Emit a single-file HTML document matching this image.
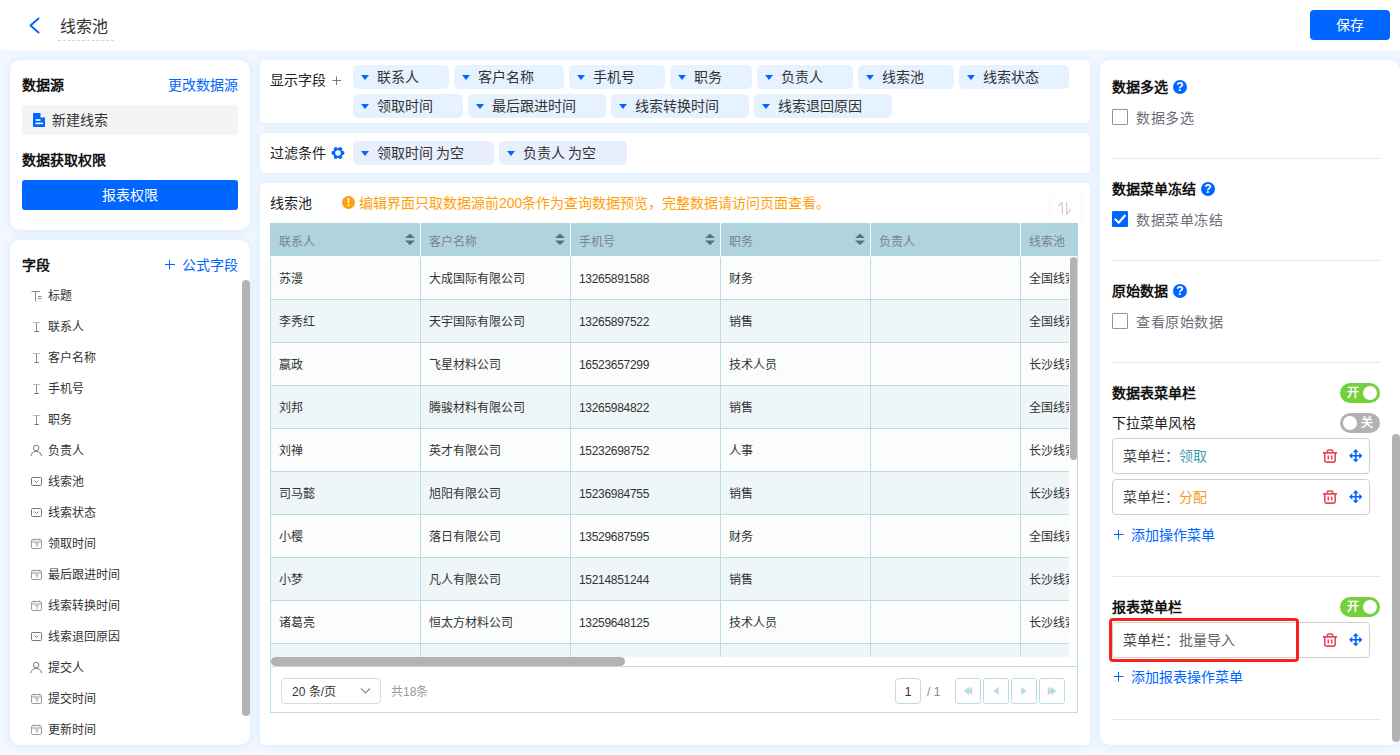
<!DOCTYPE html>
<html lang="zh-CN">
<head>
<meta charset="utf-8">
<title>线索池</title>
<style>
*{box-sizing:border-box;margin:0;padding:0}
html,body{width:1400px;height:755px;overflow:hidden}
body{font-family:"Liberation Sans",sans-serif;font-size:14px;color:#222;background:#f3f8ff;position:relative}
.abs{position:absolute}
.hdr{position:absolute;left:0;top:0;width:1400px;height:50px;background:#fff}
.title{position:absolute;left:58px;top:14px;width:56px;height:27px;padding-top:1px;font-size:16px;line-height:24px;color:#333;border-bottom:1px dashed #d4d4d4;padding-left:2px;white-space:nowrap}
.save{position:absolute;left:1310px;top:10px;width:80px;height:30px;background:#0066ff;border-radius:4px;color:#fff;font-size:14px;line-height:30px;text-align:center}
.card{position:absolute;background:#fff;box-shadow:0 0 10px 1px #daebfe}
.b{font-weight:bold;color:#111}
.link{color:#0066ff}
.t14{font-size:14px;line-height:20px;white-space:nowrap}
.t12{font-size:12px;line-height:18px;white-space:nowrap}
/* chips */
.chip{position:absolute;height:24px;border-radius:5px;background:#e6f2ff;font-size:14px;line-height:24px;color:#333;padding-left:23.5px;white-space:nowrap}
.chip:before{content:"";position:absolute;left:8px;top:10px;border-left:4.5px solid transparent;border-right:4.5px solid transparent;border-top:5px solid #0066ff}
.chip.f{background:#e9effd}
/* field list */
.fi{position:absolute;left:48px;font-size:12px;line-height:18px;color:#333;white-space:nowrap}
.ic{position:absolute;left:30px;width:14px;height:14px}
/* table */
.th{position:absolute;top:223px;height:33px;background:#afd4dd;color:#7b8294;font-size:12px;line-height:38px;padding-left:9px;white-space:nowrap;overflow:hidden}
.row{position:absolute;left:270px;width:800px;height:43px;border-bottom:1px solid #bddbe2;overflow:hidden}
.row.o{background:#fbfdfd}
.row.e{background:#eef6f8}
.row span{position:absolute;top:0;height:43px;line-height:45px;font-size:12px;color:#333;padding-left:9px;border-left:1px solid #bddbe2;white-space:nowrap;overflow:hidden}
.row span.c1{left:0;width:150px;padding-left:8px}
.row span.c2{left:150px;width:150px;padding-left:8px}
.row span.c3{left:300px;width:150px;padding-left:8px;letter-spacing:-.3px}
.row span.c4{left:450px;width:150px;padding-left:8px}
.row span.c5{left:600px;width:150px;padding-left:8px}
.row span.c6{left:750px;width:50px;padding-left:8px}
.sb{position:absolute;background:#b3b3b3;border-radius:4px}
.pbtn{position:absolute;top:678px;width:26px;height:26px;border:1px solid #bddbe2;border-radius:3px;background:#fff}
/* right */
.sep{position:absolute;left:1112px;width:268px;height:1px;background:#e8e8e8}
.cb{position:absolute;left:1112px;width:16px;height:16px;border:1px solid #8e93a6;border-radius:1px;background:#fff}
.cbl{position:absolute;left:1136px;font-size:14px;line-height:20px;color:#6a6f7a;white-space:nowrap;letter-spacing:.6px}
.q{position:absolute;width:14px;height:14px;border-radius:50%;background:#0066ff;color:#fff;font-size:12px;font-weight:bold;line-height:14px;text-align:center}
.mi{position:absolute;left:1112px;width:258px;height:36px;border:1px solid #d0d0d0;border-radius:4px;background:#fff;font-size:14px;line-height:34px;color:#444;padding-left:10px;white-space:nowrap}
.tg{position:absolute;left:1340px;width:40px;height:20px;border-radius:10px;color:#fff;font-size:12px;font-weight:bold;line-height:20px}
.tg i{position:absolute;top:3px;width:14px;height:14px;border-radius:50%;background:#fff}
</style>
</head>
<body>
<!-- HEADER -->
<div class="hdr">
  <svg class="abs" style="left:27px;top:16px" width="14" height="18" viewBox="0 0 14 18"><path d="M11.5 2.5 L3.5 9.5 L11.5 16.5" fill="none" stroke="#0066ff" stroke-width="2" stroke-linecap="round" stroke-linejoin="round"/></svg>
  <div class="title">线索池</div>
  <div class="save">保存</div>
</div>

<!-- LEFT CARD 1 -->
<div class="card" style="left:10px;top:60px;width:240px;height:170px;border-radius:10px"></div>
<div class="abs t14 b" style="left:22px;top:75px">数据源</div>
<div class="abs t14 link" style="right:1162px;top:75px">更改数据源</div>
<div class="abs" style="left:22px;top:105px;width:216px;height:30px;background:#f4f4f4;border-radius:3px"></div>
<svg class="abs" style="left:33px;top:113px" width="12" height="14" viewBox="0 0 12 14"><path d="M1 0h6.5L12 4.5V13a1 1 0 0 1-1 1H1a1 1 0 0 1-1-1V1a1 1 0 0 1 1-1z" fill="#0066ff"/><path d="M7.500 0v4.500H12z" fill="#f4f4f4"/><path d="M7.500 0L12 4.500V0z" fill="#f4f4f4"/><rect x="2.5" y="6.2" width="5" height="1.6" fill="#fff"/><rect x="2.5" y="9.6" width="7.5" height="1.6" fill="#fff"/></svg>
<div class="abs t14" style="left:52px;top:110px;color:#333">新建线索</div>
<div class="abs t14 b" style="left:22px;top:150px">数据获取权限</div>
<div class="abs" style="left:22px;top:180px;width:216px;height:30px;background:#0066ff;border-radius:3px;color:#fff;font-size:14px;line-height:30px;text-align:center">报表权限</div>

<!-- LEFT CARD 2 -->
<div class="card" style="left:10px;top:240px;width:240px;height:505px;border-radius:10px"></div>
<div class="abs t14 b" style="left:22px;top:255px">字段</div>
<svg class="abs" style="left:165px;top:260px" width="10" height="10" viewBox="0 0 10 10"><path d="M0 4.500h10M4.500 0v9.500" fill="none" stroke="#0066ff" stroke-width="1"/></svg><div class="abs t14 link" style="left:182px;top:255px">公式字段</div>
<div class="sb" style="left:242px;top:280px;width:8px;height:436px"></div>
<svg width="0" height="0" style="position:absolute">
<symbol id="ttl" viewBox="0 0 14 14"><path d="M1.500 3.500h8.500M5.500 3.500v10M8 8.500h3.500M8 10.500h3.500" fill="none" stroke="#8a8a8a" stroke-width="1"/></symbol>
<symbol id="txt" viewBox="0 0 14 14"><path d="M3 3.500h7.500" fill="none" stroke="#bdbdbd" stroke-width="1"/><path d="M6.500 3.500v9" fill="none" stroke="#9a8a8a" stroke-width="1"/><path d="M4.500 12.500h4.500" fill="none" stroke="#777" stroke-width="1"/></symbol>
<symbol id="usr" viewBox="0 0 14 14"><circle cx="6.200" cy="5" r="2.700" fill="none" stroke="#777" stroke-width="1"/><path d="M.800 13.200c.4-3 2.600-4.800 5.400-4.800s5 1.800 5.400 4.800" fill="none" stroke="#777" stroke-width="1"/></symbol>
<symbol id="sel" viewBox="0 0 14 14"><rect x="1.500" y="3.500" width="10" height="8" rx="1" fill="none" stroke="#777" stroke-width="1"/><path d="M4.500 6.500l2 2 2-2" fill="none" stroke="#777" stroke-width="1"/></symbol>
<symbol id="cal" viewBox="0 0 14 14"><rect x="1.500" y="3.500" width="10" height="9" rx="1.500" fill="none" stroke="#9c9c9c" stroke-width="1"/><path d="M1.500 6h10M4 2.500v2M9 2.500v2" fill="none" stroke="#9c9c9c" stroke-width="1"/><path d="M5 7.800h3l-1.600 3.400" fill="none" stroke="#9c9c9c" stroke-width=".9"/></symbol>
</svg>
<svg class="ic" style="top:288px"><use href="#ttl"/></svg><div class="fi" style="top:286.5px">标题</div>
<svg class="ic" style="top:319px"><use href="#txt"/></svg><div class="fi" style="top:317.5px">联系人</div>
<svg class="ic" style="top:350px"><use href="#txt"/></svg><div class="fi" style="top:348.5px">客户名称</div>
<svg class="ic" style="top:381px"><use href="#txt"/></svg><div class="fi" style="top:379.5px">手机号</div>
<svg class="ic" style="top:412px"><use href="#txt"/></svg><div class="fi" style="top:410.5px">职务</div>
<svg class="ic" style="top:443px"><use href="#usr"/></svg><div class="fi" style="top:441.5px">负责人</div>
<svg class="ic" style="top:474px"><use href="#sel"/></svg><div class="fi" style="top:472.5px">线索池</div>
<svg class="ic" style="top:505px"><use href="#sel"/></svg><div class="fi" style="top:503.5px">线索状态</div>
<svg class="ic" style="top:536px"><use href="#cal"/></svg><div class="fi" style="top:534.5px">领取时间</div>
<svg class="ic" style="top:567px"><use href="#cal"/></svg><div class="fi" style="top:565.5px">最后跟进时间</div>
<svg class="ic" style="top:598px"><use href="#cal"/></svg><div class="fi" style="top:596.5px">线索转换时间</div>
<svg class="ic" style="top:629px"><use href="#sel"/></svg><div class="fi" style="top:627.5px">线索退回原因</div>
<svg class="ic" style="top:660px"><use href="#usr"/></svg><div class="fi" style="top:658.5px">提交人</div>
<svg class="ic" style="top:691px"><use href="#cal"/></svg><div class="fi" style="top:689.5px">提交时间</div>
<svg class="ic" style="top:722px"><use href="#cal"/></svg><div class="fi" style="top:720.5px">更新时间</div>

<!-- MIDDLE CARD 1 -->
<div class="card" style="left:260px;top:60px;width:830px;height:63px;border-radius:5px"></div>
<div class="abs t14" style="left:270px;top:70px;color:#222">显示字段</div>
<svg class="abs" style="left:332px;top:76px" width="10" height="10" viewBox="0 0 10 10"><path d="M.500 4.500h8.500M4.500 .500v8.500" fill="none" stroke="#777" stroke-width="1"/></svg>
<div class="chip" style="left:353px;top:65px;width:96px">联系人</div>
<div class="chip" style="left:454px;top:65px;width:110px">客户名称</div>
<div class="chip" style="left:569px;top:65px;width:96px">手机号</div>
<div class="chip" style="left:670px;top:65px;width:82px">职务</div>
<div class="chip" style="left:757px;top:65px;width:96px">负责人</div>
<div class="chip" style="left:858px;top:65px;width:96px">线索池</div>
<div class="chip" style="left:959px;top:65px;width:110px">线索状态</div>
<div class="chip" style="left:353px;top:94px;width:110px">领取时间</div>
<div class="chip" style="left:468px;top:94px;width:138px">最后跟进时间</div>
<div class="chip" style="left:611px;top:94px;width:138px">线索转换时间</div>
<div class="chip" style="left:754px;top:94px;width:138px">线索退回原因</div>

<!-- MIDDLE CARD 2 -->
<div class="card" style="left:260px;top:133px;width:830px;height:40px;border-radius:5px"></div>
<div class="abs t14" style="left:270px;top:143px;color:#222">过滤条件</div>
<svg class="abs" style="left:330.500px;top:146px" width="14" height="14" viewBox="-7 -7 14 14"><g fill="#0066ff"><circle r="4.800"/><rect x="-1.900" y="-6.300" width="3.800" height="4" rx="1.300" transform="rotate(30)"/><rect x="-1.900" y="-6.300" width="3.800" height="4" rx="1.300" transform="rotate(90)"/><rect x="-1.900" y="-6.300" width="3.800" height="4" rx="1.300" transform="rotate(150)"/><rect x="-1.900" y="-6.300" width="3.800" height="4" rx="1.300" transform="rotate(210)"/><rect x="-1.900" y="-6.300" width="3.800" height="4" rx="1.300" transform="rotate(270)"/><rect x="-1.900" y="-6.300" width="3.800" height="4" rx="1.300" transform="rotate(330)"/></g><circle r="2.800" fill="#fff"/></svg>
<div class="chip f" style="left:353px;top:141px;width:141px">领取时间 为空</div>
<div class="chip f" style="left:499px;top:141px;width:128px">负责人 为空</div>

<!-- MIDDLE CARD 3 -->
<div class="card" style="left:260px;top:183px;width:830px;height:562px;border-radius:5px"></div>
<div class="abs t14" style="left:270px;top:193px;color:#222">线索池</div>
<div class="abs" style="left:342px;top:196px;width:13px;height:13px;border-radius:50%;background:#ff9f0a;color:#fff;font-size:11px;font-weight:bold;line-height:13px;text-align:center">!</div>
<div class="abs t14" style="left:359px;top:193px;color:#ff9f0a">编辑界面只取数据源前200条作为查询数据预览，完整数据请访问页面查看。</div>
<!-- TABLE -->
<div class="abs" style="left:270px;top:223px;width:808px;height:490px;border:1px solid #bddbe2;background:#fff"></div>
<div class="abs" style="left:270px;top:223px;width:808px;height:33px;background:#afd4dd"></div>
<div class="th" style="left:270px;width:150px;">联系人</div>
<svg class="abs" style="left:405px;top:233px" width="10" height="13" viewBox="0 0 10 13"><path d="M0 5L5 .5 10 5zM0 7.500L5 12 10 7.500z" fill="#606a80"/></svg>
<div class="th" style="left:420px;width:150px;border-left:1px solid #fff;padding-left:8px;">客户名称</div>
<svg class="abs" style="left:555px;top:233px" width="10" height="13" viewBox="0 0 10 13"><path d="M0 5L5 .5 10 5zM0 7.500L5 12 10 7.500z" fill="#606a80"/></svg>
<div class="th" style="left:570px;width:150px;border-left:1px solid #fff;padding-left:8px;">手机号</div>
<svg class="abs" style="left:705px;top:233px" width="10" height="13" viewBox="0 0 10 13"><path d="M0 5L5 .5 10 5zM0 7.500L5 12 10 7.500z" fill="#606a80"/></svg>
<div class="th" style="left:720px;width:150px;border-left:1px solid #fff;padding-left:8px;">职务</div>
<svg class="abs" style="left:855px;top:233px" width="10" height="13" viewBox="0 0 10 13"><path d="M0 5L5 .5 10 5zM0 7.500L5 12 10 7.500z" fill="#606a80"/></svg>
<div class="th" style="left:870px;width:150px;border-left:1px solid #fff;padding-left:8px;">负责人</div>
<div class="th" style="left:1020px;width:58px;border-left:1px solid #fff;padding-left:8px;">线索池</div>
<div class="abs" style="left:270px;top:256px;width:799px;height:401px;overflow:hidden;background:#fcfefe">
<div class="row o" style="left:0;top:1px"><span class="c1">苏漫</span><span class="c2">大成国际有限公司</span><span class="c3">13265891588</span><span class="c4">财务</span><span class="c5"></span><span class="c6">全国线索池</span></div>
<div class="row e" style="left:0;top:44px"><span class="c1">李秀红</span><span class="c2">天宇国际有限公司</span><span class="c3">13265897522</span><span class="c4">销售</span><span class="c5"></span><span class="c6">全国线索池</span></div>
<div class="row o" style="left:0;top:87px"><span class="c1">嬴政</span><span class="c2">飞星材料公司</span><span class="c3">16523657299</span><span class="c4">技术人员</span><span class="c5"></span><span class="c6">长沙线索池</span></div>
<div class="row e" style="left:0;top:130px"><span class="c1">刘邦</span><span class="c2">腾骏材料有限公司</span><span class="c3">13265984822</span><span class="c4">销售</span><span class="c5"></span><span class="c6">全国线索池</span></div>
<div class="row o" style="left:0;top:173px"><span class="c1">刘禅</span><span class="c2">英才有限公司</span><span class="c3">15232698752</span><span class="c4">人事</span><span class="c5"></span><span class="c6">长沙线索池</span></div>
<div class="row e" style="left:0;top:216px"><span class="c1">司马懿</span><span class="c2">旭阳有限公司</span><span class="c3">15236984755</span><span class="c4">销售</span><span class="c5"></span><span class="c6">长沙线索池</span></div>
<div class="row o" style="left:0;top:259px"><span class="c1">小樱</span><span class="c2">落日有限公司</span><span class="c3">13529687595</span><span class="c4">财务</span><span class="c5"></span><span class="c6">全国线索池</span></div>
<div class="row e" style="left:0;top:302px"><span class="c1">小梦</span><span class="c2">凡人有限公司</span><span class="c3">15214851244</span><span class="c4">销售</span><span class="c5"></span><span class="c6">长沙线索池</span></div>
<div class="row o" style="left:0;top:345px"><span class="c1">诸葛亮</span><span class="c2">恒太方材料公司</span><span class="c3">13259648125</span><span class="c4">技术人员</span><span class="c5"></span><span class="c6">长沙线索池</span></div>
<div class="row e" style="left:0;top:388px"><span class="c1"></span><span class="c2"></span><span class="c3"></span><span class="c4"></span><span class="c5"></span><span class="c6"></span></div>
</div>
<div class="sb" style="left:1069.5px;top:257px;width:7.5px;height:203px"></div>
<div class="sb" style="left:271px;top:657px;width:354px;height:9px;border-radius:4.5px"></div>
<div class="abs" style="left:270px;top:666px;width:808px;height:1px;background:#bddbe2"></div>
<div class="abs" style="left:1050px;top:193px;width:30px;height:30px;background:#fff;box-shadow:0 0 5px rgba(110,90,170,.07)"></div>
<svg class="abs" style="left:1057px;top:201px" width="16" height="16" viewBox="0 0 16 16"><path d="M1.200 5.200L5.300 1.300V13.200M9.600 1.300V13.200L14 8.100" fill="none" stroke="#c8c8c8" stroke-width="1.100" stroke-linejoin="bevel"/></svg>
<div class="abs" style="left:281px;top:678px;width:100px;height:26px;border:1px solid #dcdcdc;border-radius:4px;background:#fff;font-size:12px;line-height:26px;color:#333;padding-left:10px">20 条/页</div>
<svg class="abs" style="left:360px;top:687px" width="11" height="8" viewBox="0 0 11 8"><path d="M1 1.500l4.500 4.500L10 1.500" fill="none" stroke="#888" stroke-width="1.100"/></svg>
<div class="abs t12" style="left:391px;top:683px;color:#999">共18条</div>
<div class="abs" style="left:895px;top:678px;width:26px;height:26px;border:1px solid #bddbe2;border-radius:4px;background:#fff;font-size:12px;line-height:26px;color:#333;text-align:center">1</div>
<div class="abs t12" style="left:927px;top:683px;color:#888">/ 1</div>
<div class="pbtn" style="left:955px"><svg class="abs" style="left:5px;top:5px" width="14" height="14" viewBox="0 0 14 14" fill="#bddbe2"><path d="M8 2.800L2.700 7 8 11.200zM11.300 2.800L6 7 11.300 11.200z"/></svg></div>
<div class="pbtn" style="left:983px"><svg class="abs" style="left:5px;top:5px" width="14" height="14" viewBox="0 0 14 14" fill="#bddbe2"><path d="M9.800 2.800L4.200 7 9.800 11.200z"/></svg></div>
<div class="pbtn" style="left:1011px"><svg class="abs" style="left:5px;top:5px" width="14" height="14" viewBox="0 0 14 14" fill="#bddbe2"><path d="M4.200 2.800L9.800 7 4.200 11.200z"/></svg></div>
<div class="pbtn" style="left:1039px"><svg class="abs" style="left:5px;top:5px" width="14" height="14" viewBox="0 0 14 14" fill="#bddbe2"><path d="M2.700 2.800L8 7 2.700 11.200zM6 2.800L11.300 7 6 11.200z"/></svg></div>
<!-- RIGHT CARD -->
<div class="card" style="left:1100px;top:60px;width:300px;height:685px;border-radius:10px"></div>
<svg width="0" height="0" style="position:absolute">
<symbol id="trash" viewBox="0 0 14 14"><path d="M4.300 3.400V2.300a1.300 1.300 0 0 1 1.300-1.300h2.800a1.300 1.300 0 0 1 1.300 1.300v1.100M0 3.900h14M1.800 3.900h10.400v7.700a1.500 1.500 0 0 1-1.500 1.500H3.300a1.500 1.500 0 0 1-1.500-1.500zM5.300 6.400v4.200M8.700 6.400v4.200" fill="none" stroke="#e5465a" stroke-width="1.600"/></symbol>
<symbol id="move" viewBox="0 0 14 14"><path d="M7 2v10M2 7h10" fill="none" stroke="#0066ff" stroke-width="1.800"/><path d="M7 0l3 3.400H4zM7 14l3-3.400H4zM0 7l3.400-3v6zM14 7l-3.400-3v6z" fill="#0066ff"/></symbol>
</svg>
<div class="abs t14 b" style="left:1112px;top:77px">数据多选</div><div class="q" style="left:1173px;top:80px">?</div>
<div class="cb" style="top:109px"></div><div class="cbl" style="top:108px">数据多选</div>
<div class="sep" style="top:158px"></div>
<div class="abs t14 b" style="left:1112px;top:179px">数据菜单冻结</div><div class="q" style="left:1201px;top:182px">?</div>
<div class="cb" style="top:211px;background:#0066ff;border-color:#0066ff"><svg class="abs" style="left:0;top:0" width="14" height="14" viewBox="0 0 14 14"><path d="M1.800 6.800l3.900 3.900L12.400 3" fill="none" stroke="#fff" stroke-width="2"/></svg></div><div class="cbl" style="top:210px">数据菜单冻结</div>
<div class="sep" style="top:260px"></div>
<div class="abs t14 b" style="left:1112px;top:281px">原始数据</div><div class="q" style="left:1173px;top:284px">?</div>
<div class="cb" style="top:313px"></div><div class="cbl" style="top:312px">查看原始数据</div>
<div class="sep" style="top:362px"></div>
<div class="abs t14 b" style="left:1112px;top:383px">数据表菜单栏</div>
<div class="tg" style="top:383px;background:#75d13b;padding-left:6.500px">开<i style="left:23px"></i></div>
<div class="abs t14" style="left:1112px;top:413px;color:#222">下拉菜单风格</div>
<div class="tg" style="top:413px;background:#b2b2b2;padding-left:21px">关<i style="left:3px"></i></div>
<div class="mi" style="top:438px">菜单栏：<span style="color:#3ba3ad">领取</span></div><svg class="abs" style="left:1323px;top:449px" width="14" height="14"><use href="#trash"/></svg><svg class="abs" style="left:1348.500px;top:449px" width="13.500" height="13.500"><use href="#move"/></svg>
<div class="mi" style="top:479px">菜单栏：<span style="color:#f59a23">分配</span></div><svg class="abs" style="left:1323px;top:490px" width="14" height="14"><use href="#trash"/></svg><svg class="abs" style="left:1348.500px;top:490px" width="13.500" height="13.500"><use href="#move"/></svg>
<svg class="abs" style="left:1114px;top:530px" width="10" height="10" viewBox="0 0 10 10"><path d="M0 4.500h9.500M4.500 0v9.500" fill="none" stroke="#0066ff" stroke-width="1"/></svg><div class="abs t14 link" style="left:1131px;top:525px">添加操作菜单</div>
<div class="sep" style="top:576px"></div>
<div class="abs t14 b" style="left:1112px;top:597px">报表菜单栏</div>
<div class="tg" style="top:597px;background:#75d13b;padding-left:6.500px">开<i style="left:23px"></i></div>
<div class="mi" style="top:622px">菜单栏：<span style="color:#666">批量导入</span></div><svg class="abs" style="left:1323px;top:633px" width="14" height="14"><use href="#trash"/></svg><svg class="abs" style="left:1348.500px;top:633px" width="13.500" height="13.500"><use href="#move"/></svg>
<div class="abs" style="left:1109px;top:618px;width:190px;height:44px;border:3px solid #f5241b;border-radius:4px"></div>
<svg class="abs" style="left:1114px;top:672px" width="10" height="10" viewBox="0 0 10 10"><path d="M0 4.500h9.500M4.500 0v9.500" fill="none" stroke="#0066ff" stroke-width="1"/></svg><div class="abs t14 link" style="left:1131px;top:667px">添加报表操作菜单</div>
<div class="sep" style="top:719px"></div>
<div class="sb" style="left:1392px;top:434px;width:8px;height:308px"></div>

</body>
</html>
